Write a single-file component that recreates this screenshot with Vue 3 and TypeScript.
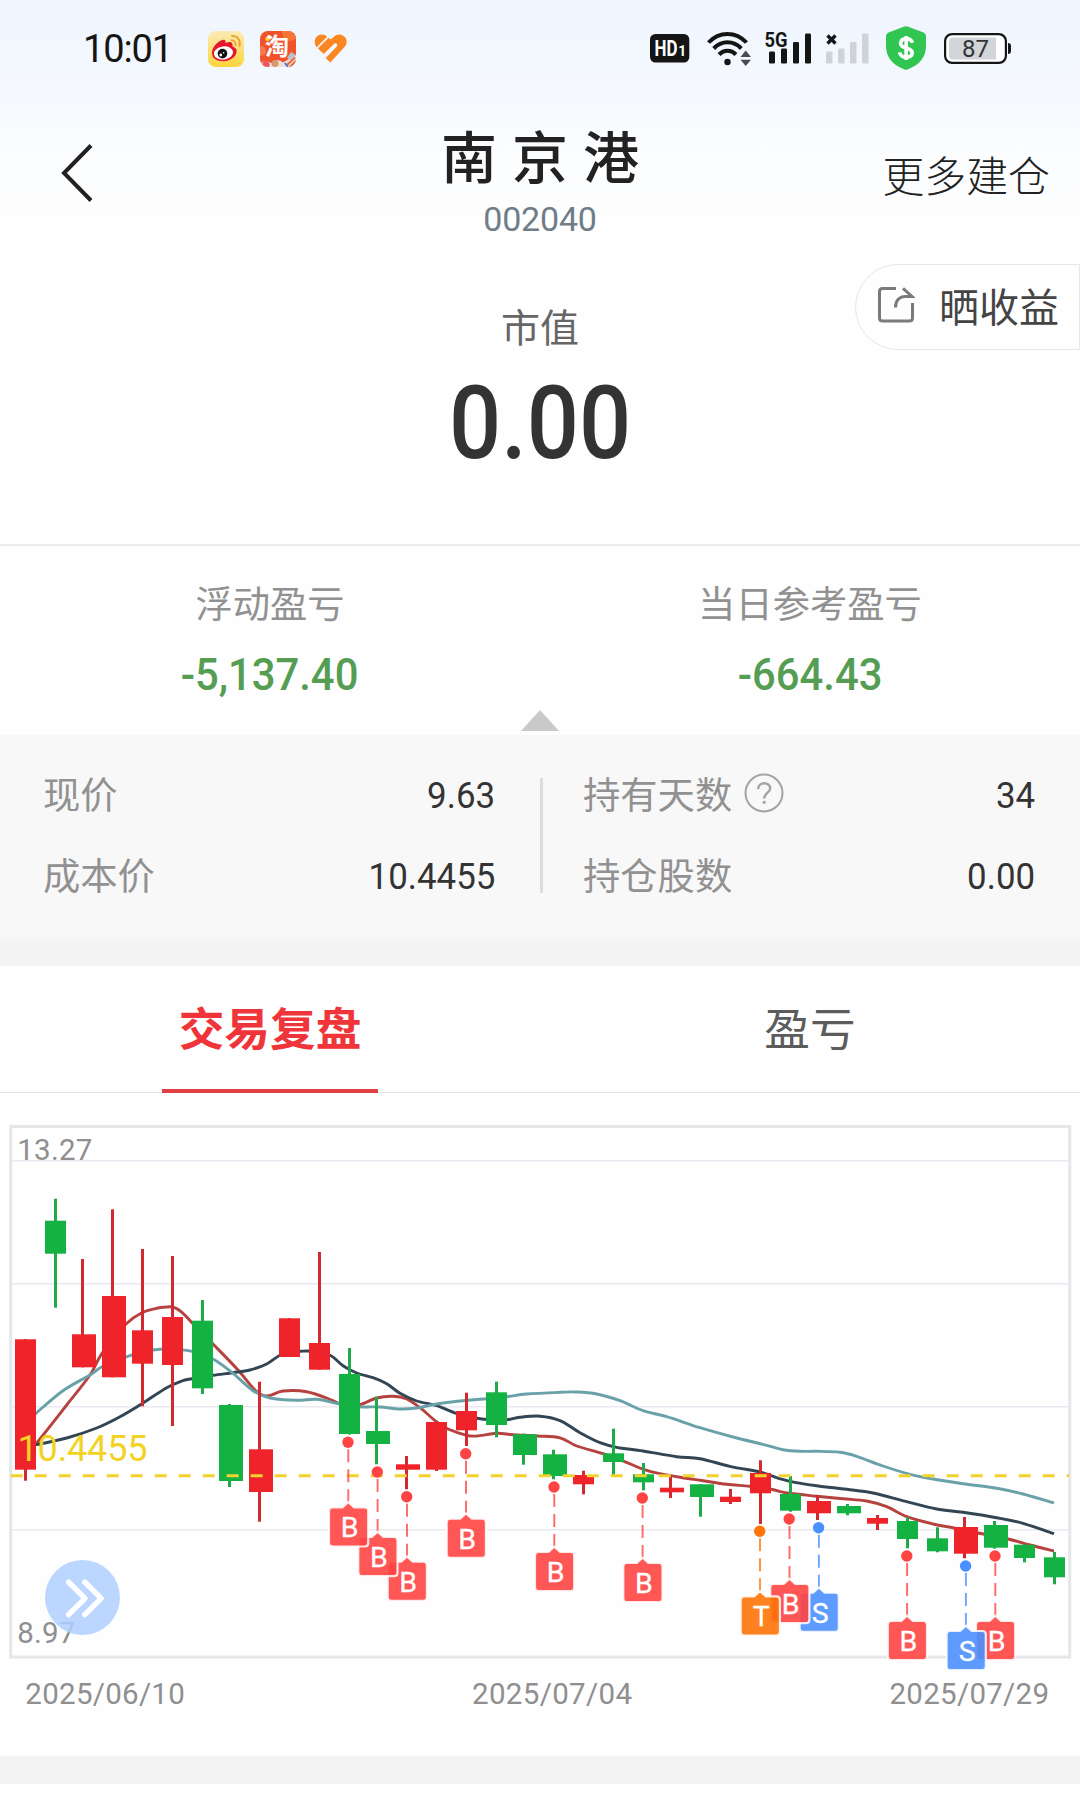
<script setup lang="ts">
type Point = [number, number]
type Side = 'B' | 'S' | 'T'

interface Candle {
  up: boolean
  x: number
  w: number
  open: number
  close: number
  high: number
  low: number
  mid: number
}

interface Marker {
  side: Side
  x: number
  y: number
}

const RED = '#ef232a'
const GREEN = '#14b143'

// [rising, left, width, bodyTop, bodyBottom, wickTop, wickBottom, wickX]
const rawCandles: [number, number, number, number, number, number, number, number][] = [
  [1, 15, 21, 1339.3, 1469.7, 1339.3, 1480.7, 25.5],
  [0, 45, 21, 1220.7, 1253.7, 1198.7, 1307.7, 55.5],
  [1, 72, 24, 1334.3, 1367.3, 1259, 1367.3, 82.5],
  [1, 102, 24, 1296, 1377.3, 1209.3, 1377.3, 112.5],
  [1, 132, 21, 1330.3, 1363.7, 1249, 1406.3, 142.5],
  [1, 162, 21, 1317, 1365, 1256, 1426, 172.5],
  [0, 192, 21, 1320.7, 1388.3, 1300, 1394, 202.5],
  [0, 219, 24, 1405, 1481, 1404, 1487, 229.5],
  [1, 249, 24, 1449.3, 1492, 1381.7, 1521.7, 259.5],
  [1, 279, 21, 1318.3, 1357, 1318.3, 1357, 289.5],
  [1, 309, 21, 1343, 1369.7, 1252, 1369.7, 319.5],
  [0, 339, 21, 1374, 1434, 1348, 1434.6, 349.5],
  [0, 366, 24, 1431, 1444, 1396.7, 1464.3, 376.5],
  [1, 396, 24, 1464.3, 1469.7, 1456, 1489.3, 406.5],
  [1, 426, 21, 1422, 1469.7, 1422, 1471, 436.5],
  [1, 456, 21, 1411, 1430.3, 1392.7, 1446, 466.5],
  [0, 486, 21, 1392.3, 1425, 1381.7, 1437.3, 496.5],
  [0, 513, 24, 1434.3, 1455, 1433.7, 1464.7, 523.5],
  [0, 543, 24, 1454.3, 1476, 1449.7, 1479.3, 553.5],
  [1, 573, 21, 1475, 1484.3, 1470.7, 1494.3, 583.5],
  [0, 603, 21, 1453.3, 1462, 1428.7, 1475, 613.5],
  [0, 633, 21, 1474.3, 1482.3, 1463, 1490.3, 643.5],
  [1, 660, 24, 1487.7, 1492.3, 1476, 1498, 670.5],
  [0, 690, 24, 1484.3, 1497, 1484.3, 1516.7, 700.5],
  [1, 720, 21, 1496.7, 1502, 1489, 1504, 730.5],
  [1, 750, 21, 1473, 1493.3, 1460.3, 1524, 760.5],
  [0, 780, 21, 1494, 1510.7, 1476, 1511.7, 790.5],
  [1, 807, 24, 1501, 1513.3, 1495, 1520, 817.5],
  [0, 837, 24, 1506, 1513.3, 1504, 1515.3, 847.5],
  [1, 867, 21, 1518, 1523.7, 1515, 1530, 877.5],
  [0, 897, 21, 1521, 1539, 1517.3, 1548.3, 907.5],
  [0, 927, 21, 1538.3, 1551.3, 1527.3, 1552.3, 937.5],
  [1, 954, 24, 1527, 1553.7, 1517, 1558.3, 964.5],
  [0, 984, 24, 1525, 1547.7, 1521, 1548.7, 994.5],
  [0, 1014, 21, 1544.7, 1558, 1544.7, 1562.3, 1024.5],
  [0, 1044, 21, 1557.3, 1577.3, 1552, 1584.3, 1054.5],
]

const candles: Candle[] = rawCandles.map(([up, x, w, open, close, high, low, mid]) => ({
  up: up === 1, x, w, open, close, high, low, mid,
}))

const shortAverage: Point[] = [
  [26, 1456], [36, 1444], [66.7, 1405], [90, 1375], [102, 1353.3], [126, 1324], [142, 1312.7], [156.7, 1308.3],
  [172.5, 1307], [183, 1313.3], [192, 1322.7], [213, 1344], [238, 1370], [255, 1390], [267, 1396], [283, 1391],
  [306.7, 1391.7], [331.7, 1400], [345, 1406], [360, 1404.7], [376.7, 1398], [393, 1396.3], [406.7, 1399],
  [420, 1407.7], [436.7, 1422], [448, 1429], [466.7, 1435.3], [476.7, 1436], [496.7, 1433.3], [513, 1434.7],
  [537, 1436], [560, 1437.8], [576.7, 1446], [603, 1453.7], [624, 1461.3], [643.5, 1469.3], [660, 1473.7],
  [680, 1477.3], [703, 1480.7], [726.7, 1484.3], [750, 1486.3], [771, 1489.3], [786.7, 1493], [801, 1494.5],
  [816.7, 1496.3], [843, 1498.7], [866.7, 1501], [886.7, 1506.7], [906.7, 1516.7], [933, 1524], [954, 1528],
  [978, 1533], [1008, 1539], [1030, 1545], [1054, 1551],
]

const middleAverage: Point[] = [
  [26, 1446], [36, 1444.7], [66.7, 1438], [96.7, 1428], [120, 1416.7], [143, 1403], [166.7, 1387.7], [181.7, 1381],
  [192, 1378.7], [213, 1375.3], [233, 1372.7], [250, 1370], [266.7, 1364], [279, 1355.7], [289, 1352],
  [300, 1351.3], [312, 1351.3], [330, 1355.3], [343, 1365.7], [356.7, 1373], [373, 1377.7], [386.7, 1383.7],
  [400, 1393.3], [416.7, 1401], [436.7, 1405.7], [456, 1413.3], [477, 1418.3], [493, 1419.8], [507, 1419.7],
  [520, 1417.3], [540, 1416.2], [560, 1420.6], [580, 1432.7], [600, 1442.7], [616.7, 1447.3], [643, 1451],
  [676.7, 1456.7], [700, 1458.7], [730, 1466.3], [760, 1472], [771, 1475.7], [790, 1481.3], [816.7, 1485.7],
  [846.7, 1489.3], [873, 1493], [906.7, 1501.7], [936.7, 1509], [963, 1512.3], [996.7, 1517.7], [1023, 1523.3],
  [1054, 1533.7],
]

const longAverage: Point[] = [
  [26, 1423], [36, 1413.3], [63, 1390.7], [90, 1375], [102, 1366.7], [126, 1357], [142, 1352], [160, 1349.3],
  [172, 1349], [192, 1351.3], [213, 1359], [233, 1373.3], [253, 1390.7], [270, 1398], [296.7, 1400.3],
  [316.7, 1399.3], [339, 1403.7], [360, 1406.7], [380, 1407], [400, 1409], [416.7, 1408], [436.7, 1404],
  [460, 1401], [486, 1398.7], [507, 1396.7], [526.7, 1394], [560, 1392.3], [576, 1392], [596.7, 1394],
  [620, 1400.7], [643, 1410.7], [666.7, 1416.7], [700, 1427.7], [733, 1437], [766.7, 1445.3], [783, 1449.7],
  [800, 1451.3], [816.7, 1451.3], [840, 1452.3], [856.7, 1456.3], [883, 1466], [910, 1474.3], [933, 1479],
  [963, 1483.7], [996.7, 1488.3], [1023, 1494], [1054, 1503],
]

// Catmull-Rom spline expressed as cubic segments
function smooth(points: Point[]): string {
  let d = `M${points[0][0]} ${points[0][1]}`
  for (let i = 0; i < points.length - 1; i++) {
    const p0 = points[i - 1] ?? points[i]
    const p1 = points[i]
    const p2 = points[i + 1]
    const p3 = points[i + 2] ?? p2
    const c1 = [p1[0] + (p2[0] - p0[0]) / 6, p1[1] + (p2[1] - p0[1]) / 6]
    const c2 = [p2[0] - (p3[0] - p1[0]) / 6, p2[1] - (p3[1] - p1[1]) / 6]
    d += `C${c1.map((n) => n.toFixed(2)).join(' ')} ${c2.map((n) => n.toFixed(2)).join(' ')} ${p2[0]} ${p2[1]}`
  }
  return d
}

const averages = [
  { color: '#b5423f', d: smooth(shortAverage) },
  { color: '#324554', d: smooth(middleAverage) },
  { color: '#69a1a8', d: smooth(longAverage) },
]

const markerColor: Record<Side, string> = { B: '#ff4444', S: '#4b90ff', T: '#ff7409' }

// Earlier trades sit on top of later ones
const markers: Marker[] = ([
  { side: 'B', x: 348, y: 1442.3 },
  { side: 'B', x: 377.3, y: 1472 },
  { side: 'B', x: 406.7, y: 1496.7 },
  { side: 'B', x: 465.7, y: 1453.7 },
  { side: 'B', x: 554, y: 1487 },
  { side: 'B', x: 642.3, y: 1498 },
  { side: 'T', x: 759.7, y: 1531.3 },
  { side: 'B', x: 789.2, y: 1519 },
  { side: 'S', x: 818.6, y: 1527.7 },
  { side: 'B', x: 906.8, y: 1556 },
  { side: 'S', x: 965.6, y: 1566 },
  { side: 'B', x: 995, y: 1556 },
] as Marker[]).reverse()

const gridLines = [1160.7, 1283.7, 1406.7, 1529.7]

const summary = [
  { label: '浮动盈亏', value: '-5,137.40' },
  { label: '当日参考盈亏', value: '-664.43' },
]

const details = [
  [
    { label: '现价', value: '9.63', help: false },
    { label: '成本价', value: '10.4455', help: false },
  ],
  [
    { label: '持有天数', value: '34', help: true },
    { label: '持仓股数', value: '0.00', help: false },
  ],
]

const tabs = [
  { label: '交易复盘', active: true },
  { label: '盈亏', active: false },
]
</script>

<template>
  <main class="page">
    <div class="top">
      <div class="status">
        <span class="clock">10:01</span>
        <div class="apps">
          <svg width="36" height="36" viewBox="0 0 36 36">
            <defs>
              <linearGradient id="wb" x1="0" y1="0" x2="0" y2="1">
                <stop offset="0" stop-color="#fbeab6" />
                <stop offset="1" stop-color="#ffd53c" />
              </linearGradient>
            </defs>
            <rect width="36" height="36" rx="8" fill="url(#wb)" />
            <path d="M4 22C4 17 8 12 13 9.500C16 8 18 8.500 17.500 12C21 10.300 25 10.500 24.500 14C24.300 15.200 24.500 15.700 26 16.200C29.500 17.500 29.500 22 26.500 25.500C22 31 12 31.500 7 28C5 26.500 4 24.500 4 22Z" fill="#e6162d" />
            <ellipse cx="15.500" cy="22" rx="9.600" ry="6.600" fill="#fff" transform="rotate(-8 15.500 22)" />
            <circle cx="14.500" cy="22.600" r="4.800" fill="#111" />
            <circle cx="12.800" cy="24" r="1.400" fill="#fff" />
            <circle cx="15.600" cy="21.800" r=".8" fill="#fff" />
            <path d="M23.500 9.300C26.500 9.300 28 11.500 27.500 14.200M24 5C29.500 4.500 33 9.500 31.500 15" fill="none" stroke="#e9a534" stroke-width="1.900" stroke-linecap="round" />
          </svg>
          <svg class="taobao" width="36" height="36" viewBox="0 0 36 36">
            <defs>
              <clipPath id="tb"><rect width="36" height="36" rx="8" /></clipPath>
            </defs>
            <g clip-path="url(#tb)">
              <rect width="36" height="36" fill="#f0522b" />
              <circle cx="30" cy="2" r="8" fill="#f57536" />
              <circle cx="1" cy="20" r="5" fill="#f67a4e" />
              <path d="M0 32.500Q6 28.500 11 32Q18 27 23 31.500L36 24V36H0Z" fill="#efe0da" />
              <circle cx="6" cy="33.500" r="3.600" fill="#ef5465" />
              <circle cx="15" cy="32.500" r="3.500" fill="#d69a72" />
              <path d="M31 21L36 24L30 29L27 27Z" fill="#b9c2cc" />
              <path d="M27 34L35 26.500M30 36L36 30" stroke="#e8683d" stroke-width="2" />
              <path d="M25 32L28 36" stroke="#4a7cc9" stroke-width="2" />
              <circle cx="7.500" cy="8" r="2.300" fill="#ffd42e" />
            </g>
            <text class="tao" x="5" y="24">淘</text>
          </svg>
          <svg width="33" height="29" viewBox="0 0 33 29">
            <path d="M2.400 12.900C-1 8.500 1 1 7.500 .6C9.600 .4 11.600 1.300 13 2.700L2.800 13.300Z" fill="#fb8722" />
            <path d="M5.600 16L16.300 5.400" stroke="#fb8722" stroke-width="4.600" />
            <path d="M5.200 15.600L19.500 2.900C23.500-.9 29-.2 31.500 3.800C33.500 7.200 32.800 10.700 30 13.500L16.300 28.500L11.700 23.900L22.500 12.700C24.500 10.500 22 8 19.900 10L9.700 19.900Z" fill="#fb8722" />
          </svg>
        </div>
        <div class="signals">
          <svg class="hd" width="40" height="29" viewBox="0 0 40 29">
            <rect width="39.300" height="28.500" rx="5.500" fill="#151515" />
            <text x="4.500" y="22" class="hd-text" textLength="23" lengthAdjust="spacingAndGlyphs">HD</text>
            <text x="28.300" y="22" class="hd-one">1</text>
          </svg>
          <svg class="wifi" width="45" height="36" viewBox="0 0 45 36">
            <g fill="none" stroke="#151515" stroke-width="4">
              <path d="M1.500 11.500C12-0 29-0 39.500 11.500" />
              <path d="M6.700 17.500C14.500 9.300 26.500 9.300 34.300 17.500" />
              <path d="M12 23.500C17 18.500 24 18.500 29 23.500" />
            </g>
            <circle cx="20.500" cy="31" r="3.200" fill="#151515" />
            <path d="M33.500 26H44L38.700 19.500ZM33.500 28.800H44L38.700 35Z" fill="#4a4b50" />
          </svg>
          <svg class="five" width="47" height="39" viewBox="0 -6 47 39">
            <text x="-.5" y="15.500" class="five-text" textLength="23" lengthAdjust="spacingAndGlyphs">5G</text>
            <g fill="#151515">
              <rect x="4" y="20.500" width="6" height="12" rx="1.300" />
              <rect x="16" y="17.500" width="6" height="15" rx="1.300" />
              <rect x="28" y="11" width="6" height="21.500" rx="1.300" />
              <rect x="40" y="2.500" width="6" height="30" rx="1.300" />
            </g>
          </svg>
          <svg class="none" width="44" height="33" viewBox="0 0 44 33">
            <path d="M2.500 4.500L10.500 12.500M10.500 4.500L2.500 12.500" stroke="#151515" stroke-width="3.400" />
            <g fill="#cfd3d9">
              <rect x="1" y="20.500" width="6.500" height="12" rx="1.300" />
              <rect x="13" y="17.500" width="6.500" height="15" rx="1.300" />
              <rect x="25" y="11" width="6.500" height="21.500" rx="1.300" />
              <rect x="37" y="2.500" width="6.500" height="30" rx="1.300" />
            </g>
          </svg>
          <svg class="shield" width="40" height="44" viewBox="0 0 40 44">
            <path d="M18.500 .6Q20 0 21.500 .6L37.500 6.400Q40 7.400 40 10V20C40 31 33.500 39 21.500 43.400Q20 44 18.500 43.400C6.500 39 0 31 0 20V10Q0 7.400 2.500 6.400Z" fill="#31c551" />
            <path d="M26.300 16.800C25.300 10.800 14.600 11.300 14.600 17.200C14.600 23.800 26.200 20.200 26.200 27C26.200 32.800 14.300 32.700 13.700 26.400M20.200 10V34" fill="none" stroke="#fff" stroke-width="3.700" />
          </svg>
          <svg class="battery" width="67" height="31" viewBox="0 0 67 31">
            <rect x="1.100" y="1.100" width="60.800" height="28.800" rx="7" fill="#fff" stroke="#151515" stroke-width="2.200" />
            <path d="M9 4.500H52V26.500H9Q5 26.500 5 22.500V8.500Q5 4.500 9 4.500Z" fill="#d1d4d8" />
            <path d="M64 10Q67 10 67 13V18Q67 21 64 21Z" fill="#151515" />
            <text x="18" y="24" class="battery-text">87</text>
          </svg>
        </div>
      </div>

      <header class="nav">
        <div class="nav-side">
          <svg class="back" width="32" height="58" viewBox="0 0 32 58">
            <path d="M30 1.500L3 29L30 56.500" fill="none" stroke="#222" stroke-width="4" />
          </svg>
        </div>
        <div class="nav-title">
          <h1>南京港</h1>
          <p class="num">002040</p>
        </div>
        <div class="nav-side nav-more">更多建仓</div>
      </header>
    </div>

    <section class="market">
      <p class="market-label">市值</p>
      <p class="market-value"><span>0.00</span></p>
      <button class="share">
        <svg width="38" height="38" viewBox="0 0 38 38">
          <g fill="none" stroke="#7a7a7a" stroke-width="3">
            <path d="M19 2.500H5.500Q2.500 2.500 2.500 5.500V32Q2.500 35 5.500 35H32.500Q35.500 35 35.500 32V17" />
            <path d="M18.500 21.500C18.500 14.500 22.500 10.500 28.500 10.500H35L26 2.300" />
          </g>
        </svg>
        <span>晒收益</span>
      </button>
    </section>

    <section class="summary">
      <div v-for="item in summary" :key="item.label" class="summary-item">
        <p class="summary-label">{{ item.label }}</p>
        <p class="summary-value"><span>{{ item.value }}</span></p>
      </div>
      <i class="fold"></i>
    </section>

    <section class="details">
      <div v-for="(column, index) in details" :key="index" class="details-column">
        <div v-for="row in column" :key="row.label" class="details-row">
          <span class="details-label">{{ row.label }}</span>
          <svg v-if="row.help" class="help" width="40" height="40" viewBox="0 0 40 40">
            <circle cx="20" cy="20" r="18.500" fill="none" stroke="#a3a3a3" stroke-width="2" />
            <path d="M14.200 16C14.200 8.500 26.200 8.500 26.200 15.500C26.200 19.500 20.200 20 20.200 25.500" fill="none" stroke="#a3a3a3" stroke-width="2.400" />
            <circle cx="20.200" cy="29.300" r="1.600" fill="#a3a3a3" />
          </svg>
          <span class="details-value">{{ row.value }}</span>
        </div>
      </div>
    </section>
    <div class="band"></div>

    <nav class="tabs">
      <a v-for="tab in tabs" :key="tab.label" class="tab" :class="{ active: tab.active }">
        <span>{{ tab.label }}</span>
      </a>
    </nav>

    <svg class="chart" width="1080" height="663" viewBox="0 1093 1080 663">
      <g stroke="#e9eaf1" stroke-width="1.500">
        <line v-for="y in gridLines" :key="y" x1="12" x2="1069" :y1="y" :y2="y" />
      </g>
      <rect x="10.700" y="1126.500" width="1059" height="530.500" fill="none" stroke="#e5e6ea" stroke-width="3" />
      <text class="axis" x="17.300" y="1160.300" textLength="75" lengthAdjust="spacing">13.27</text>
      <text class="axis" x="17.300" y="1643.300" textLength="58" lengthAdjust="spacing">8.97</text>

      <path v-for="line in averages" :key="line.color" :d="line.d" fill="none" :stroke="line.color" stroke-width="2.900" />

      <g v-for="c in candles" :key="c.x" :fill="c.up ? RED : GREEN">
        <rect :x="c.mid - 1.5" :y="c.high" width="3" :height="c.low - c.high" :fill="c.up ? '#d2282f' : '#1faa4a'" />
        <rect :x="c.x" :y="c.open" :width="c.w" :height="c.close - c.open" />
      </g>

      <path d="M10.700 1475.700H1069" stroke="#f0d32c" stroke-width="3" stroke-dasharray="12 12" />
      <text class="cost" x="17.500" y="1461" textLength="130" lengthAdjust="spacing">10.4455</text>

      <g v-for="m in markers" :key="m.x" :transform="`translate(${m.x} ${m.y})`">
        <line y1="7" y2="61" x1=".3" x2=".3" :stroke="markerColor[m.side]" stroke-width="1.900" stroke-dasharray="13 7" opacity=".8" />
        <circle r="5.700" :fill="markerColor[m.side]" />
        <path
          d="M-15.500 65H-5.500L.3 59.800L6.100 65H16.700Q20.200 65 20.200 68.500V100.700Q20.200 104.200 16.700 104.200H-15.500Q-19 104.200 -19 100.700V68.500Q-19 65 -15.500 65Z"
          :fill="markerColor[m.side]"
          fill-opacity=".9"
          stroke="#fff"
          stroke-opacity=".85"
          stroke-width="2.200"
        />
        <text class="marker" x="1.500" y="95">{{ m.side }}</text>
      </g>

      <circle cx="82.500" cy="1597.500" r="37.500" fill="#afcfff" fill-opacity=".85" />
      <path
        d="M68.500 1582L85 1598.300L68.500 1614.600M84.700 1582L101.200 1598.300L84.700 1614.600"
        fill="none"
        stroke="#fff"
        stroke-width="5.300"
        stroke-linecap="round"
        stroke-linejoin="round"
      />

      <text class="axis" x="25.300" y="1704.300" textLength="159.500" lengthAdjust="spacing">2025/06/10</text>
      <text class="axis" x="472" y="1704.300" textLength="160" lengthAdjust="spacing">2025/07/04</text>
      <text class="axis" x="889.500" y="1704.300" textLength="159.500" lengthAdjust="spacing">2025/07/29</text>
    </svg>
    <div class="band last"></div>
  </main>
</template>

<style>
body {
  background: #fff;
}
</style>

<style scoped>
.page {
  width: 1080px;
  height: 1812px;
  overflow: hidden;
  background: #fefefe;
  font-family: "Noto Sans CJK SC", "Noto Sans", sans-serif;
  color: #222;
}

p,
h1 {
  margin: 0;
}

svg {
  display: block;
  flex: none;
}

.top {
  height: 250px;
  background: linear-gradient(#eff5fe 0, #f5f9fe 38%, #fbfdff 62%, #fefefe 88%);
}

/* status bar */
.status {
  display: flex;
  align-items: center;
  height: 97px;
  padding: 0 69px 0 83px;
}

.clock {
  width: 125px;
  font: 400 38px/1 Roboto, sans-serif;
  letter-spacing: -1.1px;
  color: #151515;
}

.apps {
  display: flex;
  align-items: center;
  gap: 16px;
}

.apps svg:last-child {
  margin-left: 2px;
}

.taobao {
  overflow: visible;
}

.tao {
  font: 700 24px "Noto Sans CJK SC", sans-serif;
  fill: #fff;
}

.signals {
  display: flex;
  align-items: center;
  margin-left: auto;
}

.wifi { margin-left: 17px; }
.five { margin-left: 13px; margin-top: -8px; }
.none { margin-left: 13px; margin-top: -2px; }
.shield { margin-left: 17px; margin-top: -1px; }
.battery { margin-left: 18px; }

.hd-text {
  font: 700 21.5px Roboto, sans-serif;
  fill: #fff;
}

.hd-one {
  font: 700 14px Roboto, sans-serif;
  fill: #fff;
}

.five-text {
  font: 700 21px Roboto, sans-serif;
  fill: #151515;
}

.battery-text {
  font: 400 24px Roboto, sans-serif;
  fill: #333;
}

/* navigation */
.nav {
  display: grid;
  grid-template-columns: 1fr auto 1fr;
  height: 153px;
}

.nav-side {
  display: flex;
  align-items: center;
  padding: 0 30px 0 61px;
}

.back {
  margin-top: -2px;
}

.nav-more {
  justify-content: flex-end;
  font-size: 41.9px;
  line-height: 1;
  font-weight: 300;
}

.nav-title {
  padding-top: 21.5px;
  text-align: center;
}

.nav-title h1 {
  font-size: 56px;
  line-height: 70px;
  font-weight: 500;
  letter-spacing: 15px;
  margin-right: -15px;
}

.nav-title .num {
  margin-top: 10.5px;
  font: 400 34px/40px Roboto, sans-serif;
  letter-spacing: -0.2px;
  color: #6f7d88;
}

/* market value */
.market {
  position: relative;
  box-sizing: border-box;
  height: 296px;
  padding-top: 50px;
  border-bottom: 2px solid #ececec;
  text-align: center;
}

.market-label {
  font-size: 39px;
  line-height: 50px;
  color: #666;
}

.market-value {
  margin-top: 18px;
  font: 500 102px/110px Roboto, sans-serif;
  color: #333;
}

.market-value span {
  display: inline-block;
  transform: scaleX(0.9);
}

.share {
  position: absolute;
  top: 14px;
  right: 0;
  display: flex;
  align-items: center;
  box-sizing: border-box;
  width: 225px;
  height: 86px;
  padding: 0 0 0 21px;
  border: 1.5px solid #e6e6e6;
  border-radius: 43px 0 0 43px;
  background: #fefefe;
  font: 400 40px/1 "Noto Sans CJK SC", sans-serif;
  color: #444;
}

.share svg {
  margin-right: 24px;
  margin-top: -5px;
}

.share span {
  margin-top: -4px;
}

/* profit summary */
.summary {
  position: relative;
  display: flex;
  height: 189px;
}

.summary-item {
  flex: 1;
  padding-top: 34px;
  text-align: center;
}

.summary-label {
  font-size: 37.3px;
  line-height: 44px;
  color: #919191;
}

.summary-value {
  margin-top: 26px;
  font: 500 44px/50px Roboto, sans-serif;
  color: #559d53;
}

.summary-value span {
  display: inline-block;
  transform: scaleX(0.95);
}

.fold {
  position: absolute;
  left: 521px;
  bottom: 4px;
  border: 19px solid transparent;
  border-top: 0;
  border-bottom: 21px solid #c9c9c9;
}

/* position details */
.details {
  display: flex;
  box-sizing: border-box;
  height: 202px;
  padding-top: 17px;
  background: #f8f8f8;
}

.details-column {
  position: relative;
  box-sizing: border-box;
  width: 540px;
  padding: 0 44.5px 0 43px;
}

.details-column + .details-column::before {
  content: "";
  position: absolute;
  left: 0;
  top: 26px;
  width: 2.5px;
  height: 115px;
  background: #dcdcdc;
}

.details-row {
  display: flex;
  align-items: center;
  height: 81px;
}

.details-label {
  font-size: 37.3px;
  line-height: 44px;
  color: #919191;
}

.help {
  margin-left: 12px;
}

.details-value {
  margin: 4px 0 0 auto;
  font: 400 37.5px/44px Roboto, sans-serif;
  color: #333;
  transform: scaleX(0.93);
  transform-origin: right;
}

.band {
  height: 29px;
  background: #f4f4f4;
}

.band.last {
  height: 28px;
}

/* tabs */
.tabs {
  display: flex;
  box-sizing: border-box;
  height: 127px;
  border-bottom: 1px solid #e4e5e8;
}

.tab {
  position: relative;
  flex: 1;
  padding-top: 29.5px;
  text-align: center;
  font-size: 45.7px;
  line-height: 60px;
  color: #5c5c5c;
}

.tab.active {
  font-weight: 700;
  color: #f0353a;
}

.tab.active::after {
  content: "";
  position: absolute;
  left: 162px;
  bottom: -1px;
  width: 216px;
  height: 4.5px;
  background: #e23f43;
}

/* chart */
.axis {
  font: 400 29.5px Roboto, sans-serif;
  fill: #8f8f8f;
}

.cost {
  font: 400 36px Roboto, sans-serif;
  fill: #f2d324;
}

.marker {
  font: 400 28.5px Roboto, sans-serif;
  fill: #fff;
  stroke: #fff;
  stroke-width: 0.3px;
  text-anchor: middle;
}
</style>
